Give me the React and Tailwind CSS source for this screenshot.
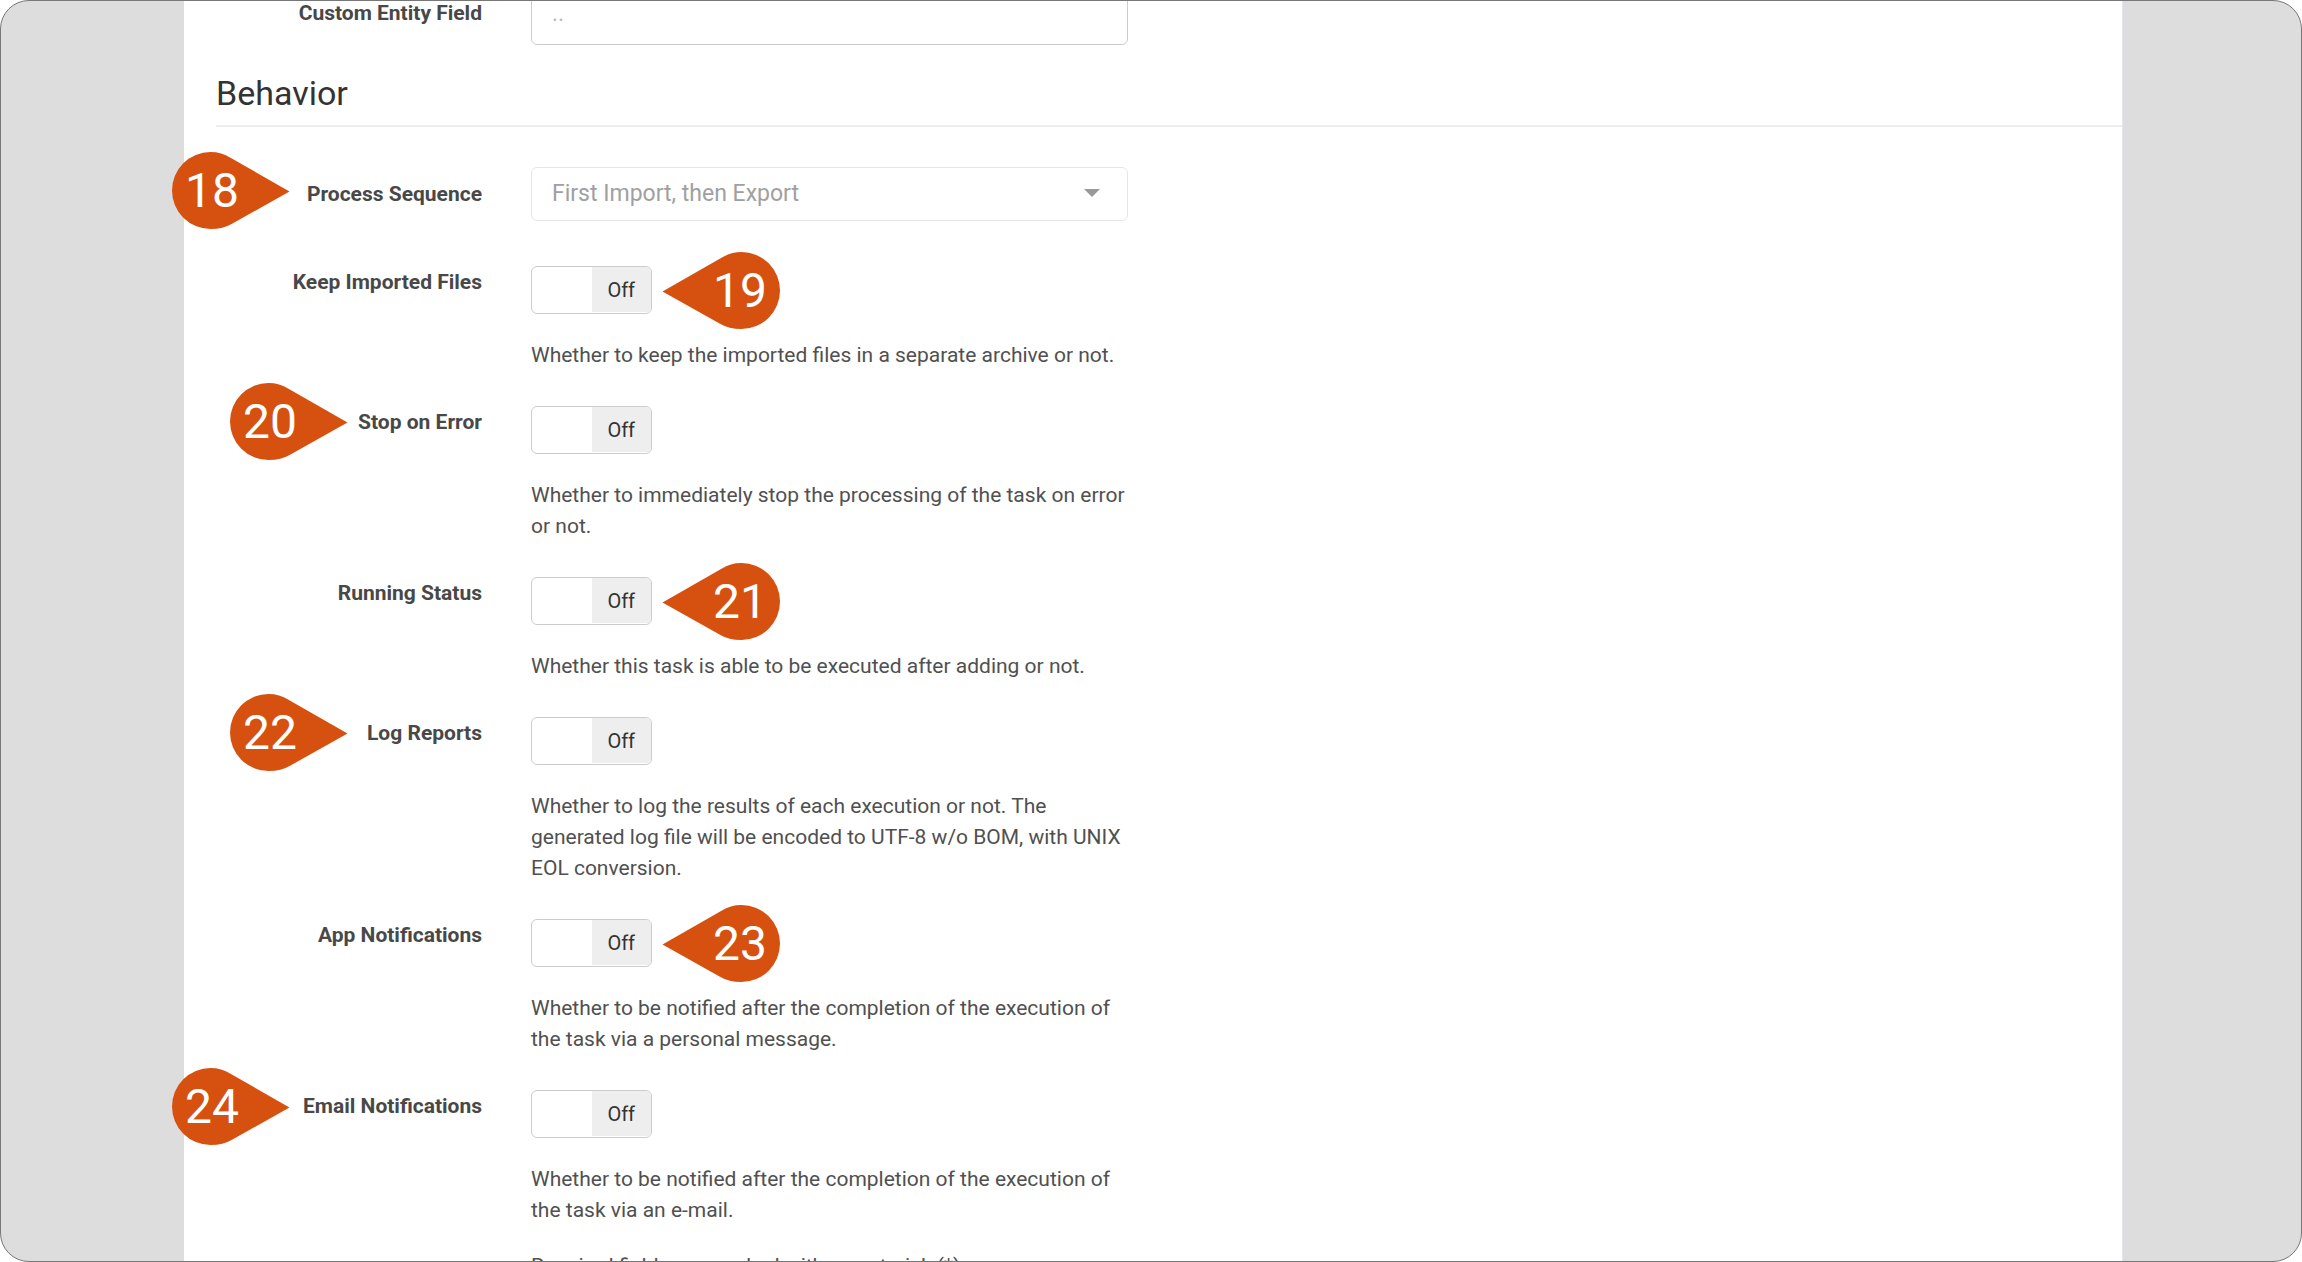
import React from "react";

const switches = [
  {
    id: "keep-files",
    label: "Keep Imported Files",
    help: "Whether to keep the imported files in a separate archive or not.",
    pin: 19,
    side: "right",
  },
  {
    id: "stop-on-error",
    label: "Stop on Error",
    help: "Whether to immediately stop the processing of the task on error or not.",
    pin: 20,
    side: "near",
  },
  {
    id: "running-status",
    label: "Running Status",
    help: "Whether this task is able to be executed after adding or not.",
    pin: 21,
    side: "right",
  },
  {
    id: "log-reports",
    label: "Log Reports",
    help: "Whether to log the results of each execution or not. The generated log file will be encoded to UTF-8 w/o BOM, with UNIX EOL conversion.",
    pin: 22,
    side: "near",
  },
  {
    id: "app-notifications",
    label: "App Notifications",
    help: "Whether to be notified after the completion of the execution of the task via a personal message.",
    pin: 23,
    side: "right",
  },
  {
    id: "email-notifications",
    label: "Email Notifications",
    help: "Whether to be notified after the completion of the execution of the task via an e-mail.",
    pin: 24,
    side: "far",
  },
];

// Where a pin sits over its row: beside the control, or left of the label.
const pinPlace = {
  right: "left-[478px] -top-[14px]",
  near: "left-[46px] -top-[23px]",
  far: "-left-[12px] -top-[22px]",
  select: "-left-[12px] -top-[15px]",
};

function Pin({ number, place }) {
  const pointsLeft = place === "right";
  return (
    <div className={`absolute z-10 h-[77px] w-[118px] ${pinPlace[place]}`}>
      <svg
        viewBox="0 0 118 77"
        className={`absolute inset-0 h-full w-full ${pointsLeft ? "-scale-x-100" : ""}`}
        aria-hidden="true"
      >
        <path
          d="M38.500 0C46 0 52.500 2 58.500 5.800L117.500 39.500L60.500 71.500C54 75.300 47 77 38.500 77A38.500 38.500 0 0 1 38.500 0Z"
          fill="#d65110"
        />
      </svg>
      <span
        className={`relative flex h-full w-20 items-center justify-center text-5xl text-white ${
          pointsLeft ? "ml-auto" : ""
        }`}
      >
        {number}
      </span>
    </div>
  );
}

function Label({ htmlFor, children }) {
  return (
    <label
      htmlFor={htmlFor}
      className="w-[298px] shrink-0 text-right text-[21px] leading-[33px] font-bold text-[#484848]"
    >
      {children}
    </label>
  );
}

function SwitchRow({ item }) {
  return (
    <div className="relative mb-[35px] flex gap-[49px]">
      <Label htmlFor={item.id}>{item.label}</Label>
      <div className="w-full max-w-[597px]">
        <button
          id={item.id}
          type="button"
          role="switch"
          aria-checked="false"
          className="grid h-12 w-[121px] grid-cols-2 overflow-hidden rounded-md border border-[#ccc] bg-white pb-px"
        >
          <span />
          <span className="flex h-full items-center justify-center bg-[#eee] text-xl text-[#333]">
            Off
          </span>
        </button>
        <p className="mt-[26px] text-[21px] leading-[31px] text-[#505050]">{item.help}</p>
      </div>
      <Pin number={item.pin} place={item.side} />
    </div>
  );
}

export default function App() {
  return (
    <div className="h-screen overflow-hidden rounded-[29px] border border-[#777] bg-[#ddd] pr-[178px] pl-[183px] font-['Roboto',sans-serif]">
      <main className="flow-root h-full border-r border-[#e4e4ea] bg-white">
        <div className="-mt-[19px] flex items-center gap-[49px]">
          <Label htmlFor="entity-field">Custom Entity Field</Label>
          <input
            id="entity-field"
            type="text"
            placeholder=".."
            className="h-[63px] w-full max-w-[597px] rounded-md border border-[#ccc] px-5 text-[23px] placeholder:text-[#bbb]"
          />
        </div>

        <h2 className="mb-10 ml-8 border-b-2 border-[#eee] pt-7 pb-3 text-[34px] leading-[40px] text-[#333]">
          Behavior
        </h2>

        <div className="relative mb-[45px] flex items-center gap-[49px]">
          <Label htmlFor="sequence">Process Sequence</Label>
          <div className="relative w-full max-w-[597px]">
            <select
              id="sequence"
              className="h-[54px] w-full appearance-none rounded-md border border-[#e5e5e5] bg-white px-5 pt-px text-[23px] text-[#a0a0a0]"
            >
              <option>First Import, then Export</option>
            </select>
            <svg
              viewBox="0 0 16 8"
              className="pointer-events-none absolute top-[22px] right-7 h-2 w-4"
              aria-hidden="true"
            >
              <path d="M0 0H16L8 8Z" fill="#999" />
            </svg>
          </div>
          <Pin number={18} place="select" />
        </div>

        {switches.map((item) => (
          <SwitchRow key={item.id} item={item} />
        ))}

        <p className="-mt-[10px] ml-[347px] text-[21px] leading-[31px] text-[#505050]">
          Required fields are marked with an asterisk (*)
        </p>
      </main>
    </div>
  );
}
